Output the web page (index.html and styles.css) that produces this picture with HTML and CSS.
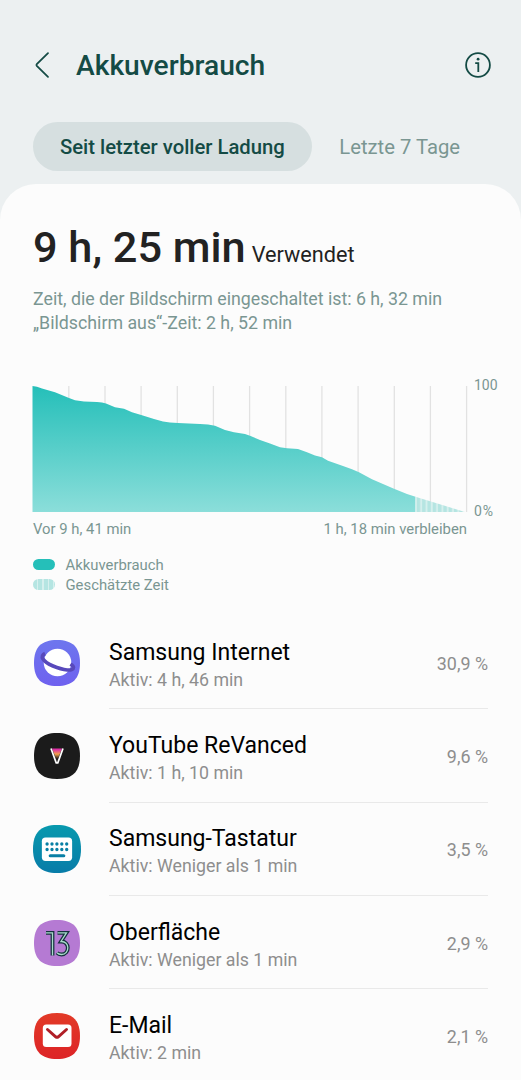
FILE: index.html
```html
<!DOCTYPE html>
<html lang="de">
<head>
<meta charset="utf-8">
<title>Akkuverbrauch</title>
<link rel="stylesheet" href="styles.css">
</head>
<body>
<header class="header">
  <svg class="back" width="14" height="26" viewBox="0 0 14 26"><path d="M13 1.2 1.8 12.1Q1 13 1.8 13.9L13 24.8"/></svg>
  <h1 class="title">Akkuverbrauch</h1>
  <svg class="info" width="26" height="26" viewBox="0 0 26 26"><circle cx="13" cy="13" r="11.9"/><path d="M10.2 11.2H13.3V20"/><circle class="dot" cx="13.1" cy="7.2" r="1.4"/></svg>
</header>
<nav class="tabs">
  <a class="tab tab-active">Seit letzter voller Ladung</a>
  <a class="tab">Letzte 7 Tage</a>
</nav>
<main class="sheet">
  <p class="total"><span class="time">9 h, 25 min</span><span class="used">Verwendet</span></p>
  <div class="details">
    <p class="on">Zeit, die der Bildschirm eingeschaltet ist: 6 h, 32 min</p>
    <p class="off">„Bildschirm aus“-Zeit: 2 h, 52 min</p>
  </div>
  <div class="chart">
    <svg width="435" height="126" viewBox="0 0 435 126">
      <defs>
        <linearGradient id="fill" x1="0" y1="0" x2="0" y2="1"><stop offset="0" stop-color="#25bfb9"/><stop offset="1" stop-color="#8bdeda"/></linearGradient>
        <pattern id="stripes" width="5.3" height="126" x="383" patternUnits="userSpaceOnUse"><rect width="5.3" height="126" fill="#d6f0ee"/><rect x=".8" width="3.4" height="126" fill="#b5e5e2"/></pattern>
      </defs>
      <path class="grid" d="M35.8 0V126M72 0V126M108.1 0V126M144.3 0V126M180.4 0V126M216.6 0V126M252.8 0V126M288.9 0V126M325.1 0V126M361.3 0V126M397.4 0V126M433.6 0V126"/>
      <path fill="url(#fill)" d="M-.5 0 4 .8 9 2.5 22 6.3 36 12 42 14.2 51 15.4 64 16 69 16.4 73 17.4 82 21.3 91 22.8 99 26.3 109 29.2 121 33 130 35.4 137 36.5 145 37 167 37.9 175 38.5 182 39.7 192 44 201 46.2 212 48 217 49.8 227 54 237 57.5 247 61.2 254 62.3 265 63 274 66.2 282 69.5 289 71.3 295 74.7 310 80 319 83.2 326 86.3 339 93.3 361 102.7 374 108 382.500 110.7V126H-.5Z"/>
      <path fill="url(#stripes)" d="M382.500 110.7 432 126H382.500Z"/>
    </svg>
    <div class="scale"><span>100</span><span class="zero">0%</span></div>
  </div>
  <div class="range"><span class="since">Vor 9 h, 41 min</span><span class="left">1 h, 18 min verbleiben</span></div>
  <div class="legend">
    <div class="key"><i class="swatch"></i><span>Akkuverbrauch</span></div>
    <div class="key"><i class="swatch swatch-striped"></i><span>Geschätzte Zeit</span></div>
  </div>
  <ul class="apps">
    <li class="app">
      <svg class="icon" viewBox="0 0 46 46"><defs><linearGradient id="net" x1="0" y1="0" x2="0" y2="1"><stop offset="0" stop-color="#6d76ee"/><stop offset="1" stop-color="#6f61ef"/></linearGradient></defs><path fill="url(#net)" d="M23 0C38.7 0 46 7.3 46 23S38.7 46 23 46 0 38.7 0 23 7.3 0 23 0Z"/><circle cx="23.500" cy="22.500" r="13.800" fill="#fff"/><path d="M11 13.500C5.500 16 8.500 21.500 19 26S39.500 31.500 39.500 27.500Q39.500 26 36.500 24" fill="none" stroke="#5849bb" stroke-width="3.600"/></svg>
      <div class="body"><div class="text"><p class="name">Samsung Internet</p><p class="active">Aktiv: 4 h, 46 min</p></div><span class="share">30,9 %</span></div>
    </li>
    <li class="app">
      <svg class="icon" viewBox="0 0 46 46"><defs><linearGradient id="vee" x1="0" y1="0" x2="0" y2="1"><stop offset=".1" stop-color="#dd2fa4"/><stop offset=".45" stop-color="#f3a34c"/><stop offset=".8" stop-color="#2b221b"/></linearGradient></defs><path fill="#1b1b1b" d="M23 0C38.7 0 46 7.3 46 23S38.7 46 23 46 0 38.7 0 23 7.3 0 23 0Z"/><path fill="url(#vee)" d="M18 15.500H28L23 28Z"/><path d="M17 15.500 22.200 29.800H23.800L29 15.500" fill="none" stroke="#fff" stroke-width="1.700"/></svg>
      <div class="body"><div class="text"><p class="name">YouTube ReVanced</p><p class="active">Aktiv: 1 h, 10 min</p></div><span class="share">9,6 %</span></div>
    </li>
    <li class="app">
      <svg class="icon icon-large" viewBox="0 0 46 46"><defs><linearGradient id="kb" x1="0" y1="0" x2="0" y2="1"><stop offset="0" stop-color="#0899ae"/><stop offset="1" stop-color="#087ca8"/></linearGradient></defs><path fill="url(#kb)" d="M23 0C38.7 0 46 7.3 46 23S38.7 46 23 46 0 38.7 0 23 7.3 0 23 0Z"/><rect x="8.500" y="12" width="29" height="22.500" rx="3.500" fill="#fff"/><path d="M13.500 18.200H33M13.500 23.500H33" stroke="#087fa5" stroke-width="3.200" stroke-linecap="round" stroke-dasharray="0 4.700"/><path d="M16.500 29.500H29.500" stroke="#087fa5" stroke-width="3" stroke-linecap="round"/></svg>
      <div class="body"><div class="text"><p class="name">Samsung-Tastatur</p><p class="active">Aktiv: Weniger als 1 min</p></div><span class="share">3,5 %</span></div>
    </li>
    <li class="app">
      <svg class="icon" viewBox="0 0 46 46"><path fill="#b57ad3" d="M23 0C38.7 0 46 7.3 46 23S38.7 46 23 46 0 38.7 0 23 7.3 0 23 0Z"/><g fill="none"><path d="M12 12.800H18.500V35.500M23.500 12.800H32.500L27 21.500C36 21 36 34.500 27.500 34.500Q24.500 34.500 23 32.800" stroke="#16323e" stroke-width="3.800"/><path d="M12 12.800H18.500V35.500M23.500 12.800H32.500L27 21.500C36 21 36 34.500 27.500 34.500Q24.500 34.500 23 32.800" stroke="#a9dccb" stroke-width="1.300"/></g></svg>
      <div class="body"><div class="text"><p class="name">Oberfläche</p><p class="active">Aktiv: Weniger als 1 min</p></div><span class="share">2,9 %</span></div>
    </li>
    <li class="app">
      <svg class="icon" viewBox="0 0 46 46"><defs><linearGradient id="mail" x1="0" y1="0" x2="0" y2="1"><stop offset="0" stop-color="#e23a27"/><stop offset="1" stop-color="#dd2427"/></linearGradient></defs><path fill="url(#mail)" d="M23 0C38.7 0 46 7.3 46 23S38.7 46 23 46 0 38.7 0 23 7.3 0 23 0Z"/><rect x="8.800" y="11.500" width="28.700" height="22.500" rx="3.500" fill="#fff"/><path d="M13.500 16.500 21.700 23.800Q23 24.800 24.300 23.800L32.500 16.500" fill="none" stroke="#b01f27" stroke-width="3" stroke-linecap="round"/></svg>
      <div class="body"><div class="text"><p class="name">E-Mail</p><p class="active">Aktiv: 2 min</p></div><span class="share">2,1 %</span></div>
    </li>
  </ul>
</main>
</body>
</html>
```
FILE: styles.css
```css
* { box-sizing: border-box; }
body { margin: 0; height: 1080px; overflow: hidden; background: #ecf0f1; color: #222; font-family: Roboto, sans-serif; }
p, h1, ul { margin: 0; padding: 0; }
svg { display: block; flex: none; overflow: visible; }
span, p, h1, a { white-space: nowrap; }
.header { display: flex; align-items: center; height: 122px; padding: 8px 30px 0 35px; color: #144b45; }
.back { fill: none; stroke: #144b45; stroke-width: 1.8; stroke-linecap: round; }
.title { margin: 2px auto 0 27px; font-size: 28.200px; font-weight: 500; line-height: 36px; }
.info { fill: none; stroke: #144b45; stroke-width: 1.8; }
.info .dot { fill: #144b45; stroke: none; }
.tabs { display: flex; padding-left: 33px; height: 62px; }
.tab { height: 48.500px; padding: 0 27.500px 0 27px; border-radius: 25px; font-size: 20.260px; line-height: 51px; color: #7a9692; }
.tab-active { background: #d6dfe0; color: #144b45; font-weight: 500; }
.sheet { height: 896px; padding: 39px 33px 0; border-radius: 36px 36px 0 0; background: #fcfcfc; overflow: hidden; }
.total { display: flex; align-items: baseline; gap: 6px; height: 50px; line-height: 50px; }
.time { font-size: 43.300px; font-weight: 500; }
.used { font-size: 21.700px; }
.details { margin-top: 14px; font-size: 17.780px; line-height: 24px; color: #7a9692; }
.chart { display: flex; gap: 6px; margin-top: 51px; height: 126px; }
.grid { fill: none; stroke: #e2e2e2; stroke-width: 1.300; }
.scale { display: flex; flex-direction: column; justify-content: space-between; margin: -9px -20px -8px 0; font-size: 14px; line-height: 17px; color: #7a9692; }
.zero { letter-spacing: .8px; }
.range { display: flex; justify-content: space-between; width: 434px; margin-top: 7px; font-size: 14.850px; line-height: 20px; color: #7a9692; }
.legend { margin-top: 16px; font-size: 14.850px; line-height: 20px; color: #7a9692; }
.key { display: flex; align-items: center; gap: 11px; height: 20px; }
.swatch { width: 21.500px; height: 11px; margin-bottom: 1px; border-radius: 6px; background: #25bfb9; }
.swatch-striped { background: repeating-linear-gradient(90deg, #b5e5e2 0 4px, #d6f0ee 4px 5.300px); }
.apps { margin-top: 21px; list-style: none; }
.app { display: flex; align-items: center; gap: 29px; height: 93.300px; }
.icon { width: 46px; height: 46px; margin-left: 1px; }
.icon-large { width: 48px; height: 48px; margin: 0 -1px 0 0; }
.body { display: flex; align-items: center; justify-content: space-between; flex: 1; height: 100%; padding-top: 5px; border-bottom: 1px solid #e9e9e9; }
.app:last-child .body { border-color: transparent; }
.name { font-size: 23px; line-height: 30px; color: #000; }
.active { font-size: 17.750px; line-height: 24px; color: #8e8e8e; }
.share { margin-bottom: 2px; font-size: 17.900px; line-height: 24px; color: #8e8e8e; }
```
